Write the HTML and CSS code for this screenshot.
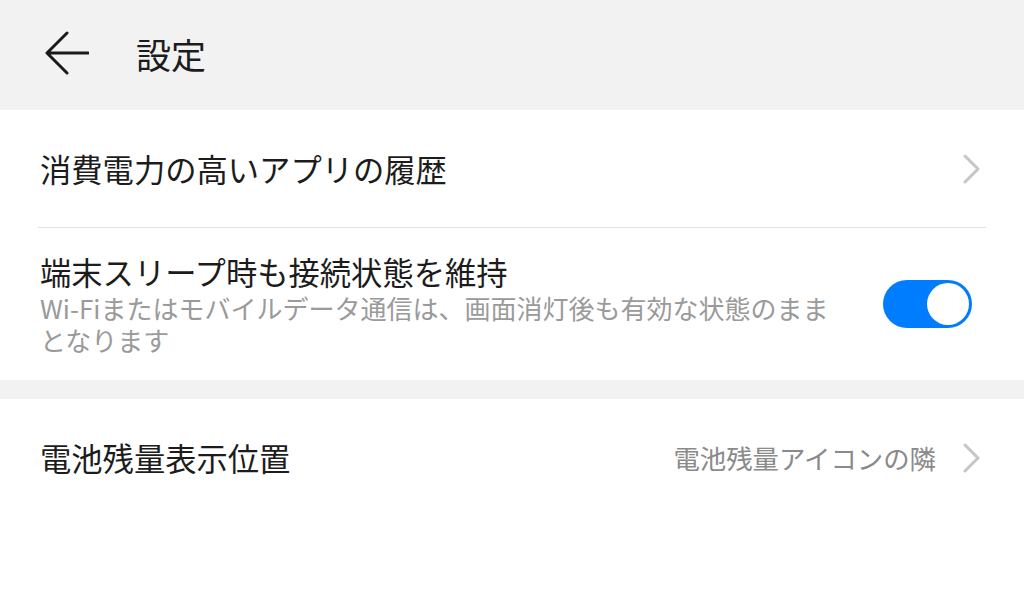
FILE: index.html
```html
<!DOCTYPE html>
<html lang="ja">
	<head>
		<meta charset="UTF-8" />
		<meta name="viewport" content="width=device-width, initial-scale=1.0" />
		<title>設定</title>
		<link rel="stylesheet" href="styles.css">
	</head>
	<body>
		<header class="topbar">
			<svg class="back" width="44" height="44" viewBox="0 0 44 44">
				<path d="M3 22 H43 M22 2 L2 22 L22 42" fill="none" stroke="#1a1a1a" stroke-width="3" stroke-linecap="round" stroke-linejoin="round" />
			</svg>
			<h1>設定</h1>
		</header>

		<section class="group">
			<div class="row">
				<div class="label">消費電力の高いアプリの履歴</div>
				<svg class="chevron" width="18" height="30" viewBox="0 0 18 30">
					<path d="M3 2 L16 15 L3 28" fill="none" stroke="#c6c6c6" stroke-width="3" stroke-linecap="round" stroke-linejoin="round" />
				</svg>
			</div>
			<div class="divider"></div>
			<div class="row row-tall">
				<div class="text">
					<div class="label">端末スリープ時も接続状態を維持</div>
					<div class="sub">Wi-Fiまたはモバイルデータ通信は、画面消灯後も有効な状態のままとなります</div>
				</div>
				<div class="switch on"><span class="knob"></span></div>
			</div>
		</section>

		<div class="gap"></div>

		<section class="group">
			<div class="row">
				<div class="label">電池残量表示位置</div>
				<div class="value">電池残量アイコンの隣</div>
				<svg class="chevron" width="18" height="30" viewBox="0 0 18 30">
					<path d="M3 2 L16 15 L3 28" fill="none" stroke="#c6c6c6" stroke-width="3" stroke-linecap="round" stroke-linejoin="round" />
				</svg>
			</div>
		</section>
	</body>
</html>
```

FILE: styles.css
```css
body {
	margin: 0;
	background-color: #fff;
	color: #1c1c1c;
	font-family: "Noto Sans CJK JP", "Noto Sans", sans-serif;
}
.topbar {
	display: flex;
	align-items: center;
	height: 110px;
	padding: 0 0 4px 45px;
	box-sizing: border-box;
	background-color: #f2f2f2;
}
.topbar h1 {
	margin: 0 0 0 47px;
	font-size: 35px;
	font-weight: normal;
	line-height: 1;
}
.row {
	display: flex;
	align-items: center;
	height: 117px;
	padding: 0 44px 0 40px;
}
.row-tall {
	height: 152px;
}
.label {
	flex: 1;
	font-size: 31.3px;
	line-height: 40px;
}
.text {
	flex: 1;
	padding-right: 38px;
}
.sub {
	font-size: 26px;
	line-height: 32px;
	color: #9a9a9a;
}
.value {
	font-size: 26.4px;
	color: #8a8a8a;
	margin-right: 26px;
}
.divider {
	height: 1px;
	margin: 0 38px;
	background-color: #e0e0e0;
}
.switch {
	display: flex;
	justify-content: flex-end;
	align-items: center;
	width: 89px;
	height: 48px;
	padding: 0 3px;
	box-sizing: border-box;
	margin-right: 8px;
	border-radius: 24px;
	background-color: #ccc;
}
.switch.on {
	background-color: #007dff;
}
.knob {
	width: 42px;
	height: 42px;
	border-radius: 50%;
	background-color: #fff;
}
.gap {
	height: 19px;
	background-color: #f2f2f2;
}
```
